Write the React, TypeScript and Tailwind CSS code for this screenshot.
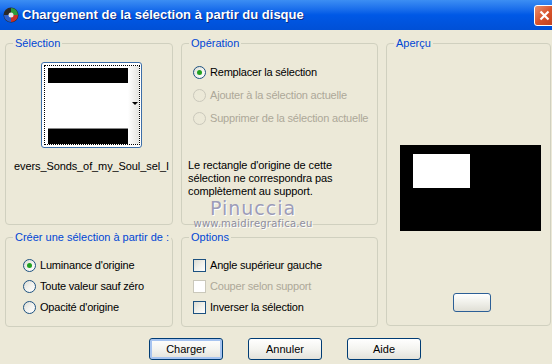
import React from "react";

const font = { fontFamily: '"Liberation Sans", Arial, sans-serif' };

function Group({
  label,
  className,
  children,
}: {
  label: string;
  className: string;
  children?: React.ReactNode;
}) {
  return (
    <div className={`relative rounded-[4px] border border-[#D0D0BF] ${className}`}>
      <span className="absolute -top-[8px] left-[7px] bg-[#ECE9D8] px-[2px] text-[11px] leading-[14px] text-[#0046D5]">
        {label}
      </span>
      {children}
    </div>
  );
}

function Radio({ checked, disabled, label }: { checked?: boolean; disabled?: boolean; label: string }) {
  return (
    <div className="flex h-[14px] items-center gap-[4px]">
      <span
        className={`flex h-[13px] w-[13px] items-center justify-center rounded-full border ${
          disabled
            ? "border-[#CAC8BB] bg-[#ECE9D8]"
            : "border-[#1C5180] bg-gradient-to-br from-[#DCDCD3] via-[#F2F2EE] to-white"
        }`}
      >
        {checked && <span className="h-[5px] w-[5px] rounded-full bg-[#21A121]" />}
      </span>
      <span className={`text-[11px] tracking-[-0.2px] ${disabled ? "text-[#ACA899]" : "text-black"}`}>{label}</span>
    </div>
  );
}

function Check({ disabled, label }: { disabled?: boolean; label: string }) {
  return (
    <div className="flex h-[14px] items-center gap-[4px]">
      <span
        className={`h-[13px] w-[13px] border ${
          disabled
            ? "border-[#CAC8BB] bg-white"
            : "border-[#1C5180] bg-gradient-to-br from-[#DCDCD3] via-[#F0F0EA] to-white"
        }`}
      />
      <span className={`text-[11px] tracking-[-0.2px] ${disabled ? "text-[#ACA899]" : "text-black"}`}>{label}</span>
    </div>
  );
}

function Button({ label, main }: { label: string; main?: boolean }) {
  return (
    <button
      className={`flex h-[22px] w-[74px] items-center justify-center rounded-[3px] border border-[#003C74] bg-gradient-to-b from-white via-[#F4F4F0] to-[#E3E2DA] text-[11px] text-black ${
        main ? "shadow-[inset_0_0_0_2px_#A7C4F0]" : ""
      }`}
    >
      {label}
    </button>
  );
}

export default function App() {
  return (
    <div className="relative h-[364px] w-[552px] overflow-hidden bg-[#ECE9D8]" style={font}>
      {/* title bar */}
      <div className="flex h-[30px] items-center bg-gradient-to-b from-[#3C8EF3] via-[#0058E6] to-[#0050D6] pl-[3px]">
        <svg width="16" height="16" viewBox="0 0 16 16">
          <circle cx="8" cy="8" r="7.5" fill="#2A2A2A" />
          <path d="M8 8 L8 1 A7 7 0 0 1 15 8 Z" fill="#2E9B3A" />
          <path d="M8 8 L15 8 A7 7 0 0 1 8 15 Z" fill="#C8302A" />
          <path d="M8 8 L8 15 A7 7 0 0 1 1 8 Z" fill="#2F5FC8" />
          <circle cx="8" cy="8" r="2.5" fill="#E8E8E8" />
        </svg>
        <span className="ml-[3px] text-[13px] font-bold text-white [text-shadow:1px_1px_0_#0A2A80]">
          Chargement de la sélection à partir du disque
        </span>
        <div className="-mr-[3px] ml-auto flex h-[21px] w-[21px] items-center justify-center rounded-[3px] border border-white bg-gradient-to-br from-[#E8906E] via-[#D8532B] to-[#C2401C]">
          <svg width="11" height="11" viewBox="0 0 11 11">
            <path d="M1.5 1.5 L9.5 9.5 M9.5 1.5 L1.5 9.5" stroke="white" strokeWidth="2.2" />
          </svg>
        </div>
      </div>

      {/* body */}
      <div className="flex gap-[8px] pl-[5px] pt-[13px]">
        <div className="flex w-[168px] flex-col gap-[12px]">
          <Group label="Sélection" className="h-[182px]">
            <div className="ml-[35px] mt-[18px] flex h-[86px] w-[101px] rounded-[3px] border border-[#3C6EA8] bg-white p-[2px]">
              <div className="flex flex-1 border border-dotted border-black">
                <div className="flex flex-1 flex-col pl-[3px] pt-[2px]">
                  <div className="h-[15px] w-[80px] bg-black" />
                  <div className="flex-1" />
                  <div className="h-[16px] w-[80px] border-t border-[#888] bg-black" />
                </div>
                <div className="relative w-[11px] bg-gradient-to-r from-white to-[#E4E4E0]">
                  <div className="absolute left-[4px] top-[36px] h-0 w-0 border-x-[3px] border-t-[3px] border-x-transparent border-t-black" />
                </div>
              </div>
            </div>
            <div className="ml-[8px] mt-[10px] whitespace-nowrap text-[11px] tracking-[-0.1px] text-black">
              evers_Sonds_of_my_Soul_sel_I
            </div>
          </Group>
          <Group label="Créer une sélection à partir de :" className="h-[90px]">
            <div className="flex flex-col gap-[7px] pl-[17px] pt-[20px]">
              <Radio checked label="Luminance d'origine" />
              <Radio label="Toute valeur sauf zéro" />
              <Radio label="Opacité d'origine" />
            </div>
          </Group>
        </div>

        <div className="flex w-[197px] flex-col gap-[12px]">
          <Group label="Opération" className="h-[182px]">
            <div className="flex flex-col gap-[9px] pl-[11px] pt-[21px]">
              <Radio checked label="Remplacer la sélection" />
              <Radio disabled label="Ajouter à la sélection actuelle" />
              <Radio disabled label="Supprimer de la sélection actuelle" />
            </div>
            <p className="ml-[6px] mt-[34px] text-[11px] leading-[13px] tracking-[-0.1px] text-black">
              Le rectangle d'origine de cette
              <br />
              sélection ne correspondra pas
              <br />
              complètement au support.
            </p>
          </Group>
          <Group label="Options" className="h-[90px]">
            <div className="flex flex-col gap-[7px] pl-[11px] pt-[20px]">
              <Check label="Angle supérieur gauche" />
              <Check disabled label="Couper selon support" />
              <Check label="Inverser la sélection" />
            </div>
          </Group>
        </div>

        <Group label="Aperçu" className="h-[283px] w-[165px]">
          <div className="ml-[13px] mt-[101px] h-[86px] w-[141px] bg-black pl-[13px] pt-[9px]">
            <div className="h-[34px] w-[57px] bg-white" />
          </div>
          <div className="ml-[66px] mt-[62px] h-[19px] w-[38px] rounded-[3px] border border-[#2C5F96] bg-gradient-to-b from-white via-[#F0F0EA] to-[#E0DFD6]" />
        </Group>
      </div>

      {/* buttons */}
      <div className="flex gap-[25px] pl-[149px] pt-[11px]">
        <Button main label="Charger" />
        <Button label="Annuler" />
        <Button label="Aide" />
      </div>

      {/* watermark */}
      <div
        className="pointer-events-none absolute left-[192px] top-[201px] flex w-[122px] flex-col items-center"
        style={{ fontFamily: '"DejaVu Sans", sans-serif' }}
      >
        <span className="text-[19px] leading-[14px] tracking-[1px] text-[#9C9CB8] [text-shadow:1px_1px_0_#ffffff]">
          Pinuccia
        </span>
        <span className="mt-[3px] text-[10px] leading-[12px] tracking-[0.2px] text-[#8E8E9E] [text-shadow:1px_1px_0_#ffffff]">
          www.maidiregrafica.eu
        </span>
      </div>
    </div>
  );
}
